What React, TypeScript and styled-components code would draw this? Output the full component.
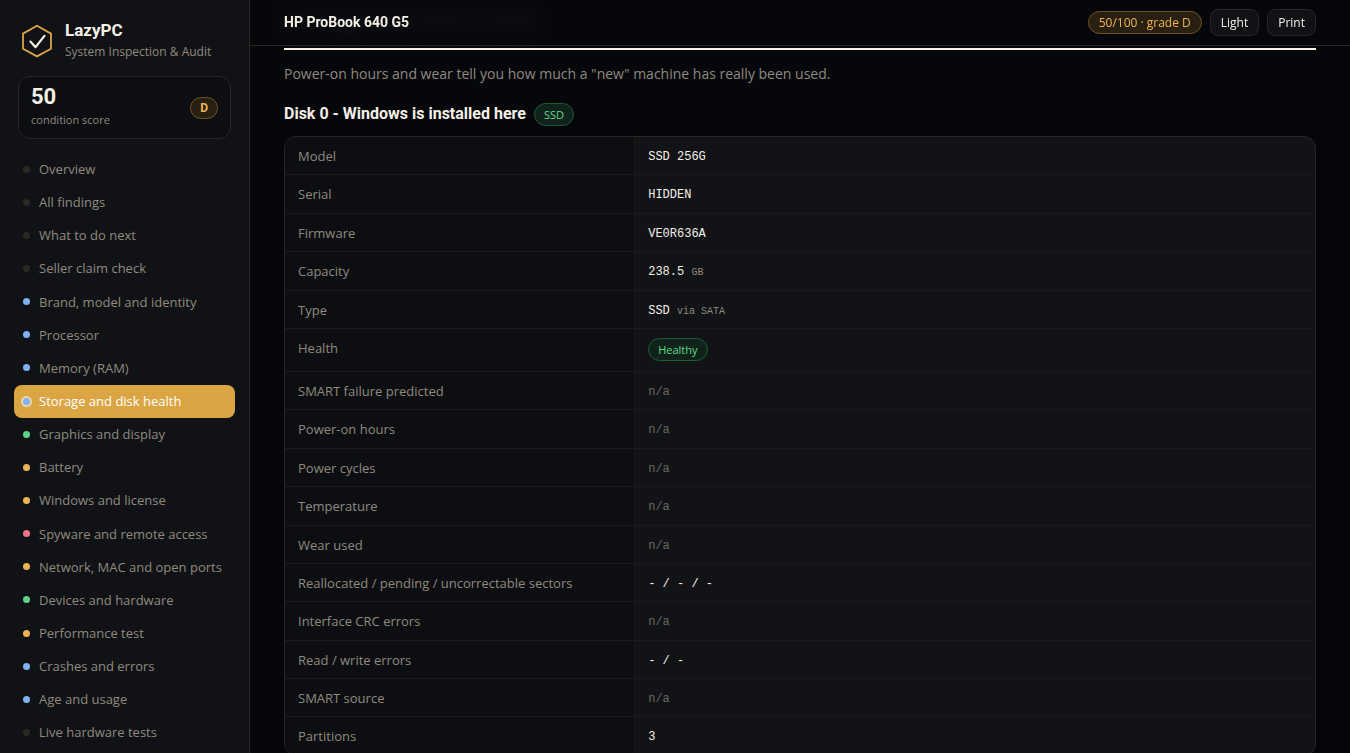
import React from "react";
import styled, { createGlobalStyle } from "styled-components";

const color = {
  page: "#06070b",
  panel: "#111216",
  inset: "#0d0e12",
  cell: "#121317",
  line: "#28261f",
  rowLine: "#1d1b18",
  text: "#f5f0e6",
  muted: "#8f8a7e",
  faint: "#6a675f",
  accent: "#dba544",
};

const tones = {
  none: "#2b2822",
  info: "#7fb2f2",
  ok: "#5fd38a",
  warn: "#ebb553",
  bad: "#f0728a",
};
type Tone = keyof typeof tones;

const pillTones = {
  warn: { fg: "#ebb553", bg: "#2a2012", line: "#6d5124" },
  ok: { fg: "#5fd98a", bg: "#10231a", line: "#1f5a39" },
};

const bodyFont = `"Open Sans", "Noto Sans", sans-serif`;
const headFont = `Roboto, "Liberation Sans", sans-serif`;
const monoFont = `"Liberation Mono", "DejaVu Sans Mono", monospace`;

const GlobalStyle = createGlobalStyle`
  *, *::before, *::after { box-sizing: border-box; }
  body {
    margin: 0;
    background: ${color.page};
    color: ${color.text};
    font: 13px/1.55 ${bodyFont};
  }
`;

const Shell = styled.div`
  display: flex;
  height: 100vh;
  overflow: hidden;
`;

const Sidebar = styled.aside`
  flex: 0 0 250px;
  overflow: hidden;
  padding: 17px 14px;
  background: ${color.panel};
  border-right: 1px solid ${color.line};
`;

const Brand = styled.div`
  display: flex;
  align-items: center;
  gap: 12px;
  padding: 0 7px;
  height: 47px;
`;

const BrandName = styled.div`
  font: 700 17px/22px ${headFont};
`;

const BrandTag = styled.div`
  color: ${color.muted};
  font-size: 12px;
  line-height: 22px;
  white-space: nowrap;
`;

const ScoreCard = styled.div`
  display: flex;
  align-items: center;
  justify-content: space-between;
  height: 63px;
  margin: 12px 4px 14px;
  padding: 0 12px;
  background: ${color.inset};
  border: 1px solid ${color.line};
  border-radius: 12px;
`;

const ScoreValue = styled.div`
  font: 700 22px/24px ${headFont};
`;

const ScoreLabel = styled.div`
  color: ${color.muted};
  font-size: 11px;
  line-height: 22px;
`;

const Pill = styled.span<{ $tone: keyof typeof pillTones; $strong?: boolean }>`
  display: inline-block;
  padding: 0 9px;
  border: 1px solid ${(p) => pillTones[p.$tone].line};
  border-radius: 12px;
  background: ${(p) => pillTones[p.$tone].bg};
  color: ${(p) => pillTones[p.$tone].fg};
  font: ${(p) => (p.$strong ? `700 12px/20px ${headFont}` : `400 11px/21px ${bodyFont}`)};
  white-space: nowrap;
`;

const GradePill = styled(Pill)`
  font-size: 12px;
  padding: 0 10px;
`;

const NavItem = styled.a<{ $active?: boolean }>`
  display: flex;
  align-items: center;
  gap: 9px;
  padding: 6px 9px 7px;
  border-radius: 8px;
  background: ${(p) => (p.$active ? color.accent : "transparent")};
  color: ${(p) => (p.$active ? "#ffffff" : color.muted)};
  text-decoration: none;
  white-space: nowrap;
`;

const Dot = styled.span<{ $tone: Tone; $ring?: boolean }>`
  flex: none;
  width: 7px;
  height: 7px;
  border-radius: 50%;
  background: ${(p) => tones[p.$tone]};
  box-shadow: ${(p) => (p.$ring ? "0 0 0 2px rgba(255, 255, 255, 0.55)" : "none")};
`;

const Main = styled.main`
  flex: 1;
  min-width: 0;
  overflow-y: auto;
  scrollbar-width: none;
`;

const TopBar = styled.header`
  position: sticky;
  top: 0;
  z-index: 2;
  display: flex;
  align-items: center;
  gap: 8px;
  height: 46px;
  padding: 0 34px;
  background: rgba(6, 7, 11, 0.94);
  backdrop-filter: blur(10px);
  border-bottom: 1px solid ${color.line};
`;

const Machine = styled.div`
  flex: 1;
  padding-bottom: 2px;
  font: 700 14px/20px ${headFont};
`;

const BarButton = styled.button`
  height: 27px;
  padding: 0 10px;
  border: 1px solid ${color.line};
  border-radius: 8px;
  background: ${color.panel};
  color: ${color.text};
  font: 12px/20px ${bodyFont};
`;

const Section = styled.section`
  margin-top: -46px;
  padding: 0 34px 34px;
`;

const SectionTitle = styled.h2`
  margin: 0 0 13px;
  height: 50px;
  padding-top: 5px;
  border-bottom: 2px solid ${color.text};
  font: 700 24px/32px ${headFont};
`;

const Intro = styled.p`
  margin: 0 0 18px;
  color: ${color.muted};
  font-size: 14px;
  line-height: 22px;
`;

const DiskTitle = styled.h3`
  display: flex;
  align-items: baseline;
  gap: 8px;
  margin: 0 0 10px;
  font: 700 16px/22px ${headFont};
`;

const TableFrame = styled.div`
  overflow: hidden;
  border: 1px solid ${color.line};
  border-radius: 12px;
  background: ${color.cell};
  box-shadow: 0 8px 24px rgba(0, 0, 0, 0.35);
`;

const FactTable = styled.table`
  width: 100%;
  border-collapse: separate;
  border-spacing: 0;
  font-size: 14px;
  line-height: 1.6;

  tr:last-child > * {
    border-bottom: 0;
  }
`;

const Label = styled.th`
  width: 34%;
  padding: 8px 13px 7px;
  background: ${color.inset};
  border-right: 1px solid ${color.rowLine};
  border-bottom: 1px solid ${color.rowLine};
  color: ${color.muted};
  font-weight: 400;
  text-align: left;
  vertical-align: top;
`;

const LabelText = styled.span`
  font-size: 13px;
`;

const Value = styled.td`
  padding: 9px 13px 10px;
  border-bottom: 1px solid ${color.rowLine};
  line-height: 18px;
  vertical-align: top;
`;

const Mono = styled.span<{ $faint?: boolean }>`
  color: ${(p) => (p.$faint ? color.faint : color.text)};
  font-family: ${monoFont};
  font-size: 12px;
  line-height: 12px;
`;

const Unit = styled.span`
  color: ${color.muted};
  font-size: 10px;
`;

const nav: [string, Tone][] = [
  ["Overview", "none"],
  ["All findings", "none"],
  ["What to do next", "none"],
  ["Seller claim check", "none"],
  ["Brand, model and identity", "info"],
  ["Processor", "info"],
  ["Memory (RAM)", "info"],
  ["Storage and disk health", "info"],
  ["Graphics and display", "ok"],
  ["Battery", "warn"],
  ["Windows and license", "warn"],
  ["Spyware and remote access", "bad"],
  ["Network, MAC and open ports", "warn"],
  ["Devices and hardware", "ok"],
  ["Performance test", "warn"],
  ["Crashes and errors", "info"],
  ["Age and usage", "info"],
  ["Live hardware tests", "none"],
];

const activeItem = "Storage and disk health";

type Fact = { label: string; value?: string; unit?: string; pill?: string };

const facts: Fact[] = [
  { label: "Model", value: "SSD 256G" },
  { label: "Serial", value: "HIDDEN" },
  { label: "Firmware", value: "VE0R636A" },
  { label: "Capacity", value: "238.5", unit: "GB" },
  { label: "Type", value: "SSD", unit: "via SATA" },
  { label: "Health", pill: "Healthy" },
  { label: "SMART failure predicted" },
  { label: "Power-on hours" },
  { label: "Power cycles" },
  { label: "Temperature" },
  { label: "Wear used" },
  { label: "Reallocated / pending / uncorrectable sectors", value: "- / - / -" },
  { label: "Interface CRC errors" },
  { label: "Read / write errors", value: "- / -" },
  { label: "SMART source" },
  { label: "Partitions", value: "3" },
];

function Logo() {
  return (
    <svg width="32" height="34" viewBox="0 0 32 34" fill="none" aria-hidden="true">
      <path d="M16 1.8 30 9.6v15.2L16 32.4 2 24.8V9.6z" stroke={color.accent} strokeWidth="1.8" />
      <path
        d="m9.4 17.6 5.2 5.6 8.8-11.4"
        stroke={color.text}
        strokeWidth="2.2"
        strokeLinecap="round"
        strokeLinejoin="round"
      />
    </svg>
  );
}

function FactValue({ fact }: { fact: Fact }) {
  if (fact.pill) return <Pill $tone="ok">{fact.pill}</Pill>;
  if (!fact.value) return <Mono $faint>n/a</Mono>;
  return (
    <Mono>
      {fact.value}
      {fact.unit && <> <Unit>{fact.unit}</Unit></>}
    </Mono>
  );
}

export default function App() {
  return (
    <>
      <GlobalStyle />
      <Shell>
        <Sidebar>
          <Brand>
            <Logo />
            <div>
              <BrandName>LazyPC</BrandName>
              <BrandTag>System Inspection &amp; Audit</BrandTag>
            </div>
          </Brand>
          <ScoreCard>
            <div>
              <ScoreValue>50</ScoreValue>
              <ScoreLabel>condition score</ScoreLabel>
            </div>
            <Pill $tone="warn" $strong>D</Pill>
          </ScoreCard>
          <nav>
            {nav.map(([name, tone]) => (
              <NavItem key={name} href="#" $active={name === activeItem}>
                <Dot $tone={tone} $ring={name === activeItem} />
                {name}
              </NavItem>
            ))}
          </nav>
        </Sidebar>
        <Main>
          <TopBar>
            <Machine>HP ProBook 640 G5</Machine>
            <GradePill $tone="warn">50/100 · grade D</GradePill>
            <BarButton type="button">Light</BarButton>
            <BarButton type="button">Print</BarButton>
          </TopBar>
          <Section>
            <SectionTitle>Storage and disk health</SectionTitle>
            <Intro>Power-on hours and wear tell you how much a "new" machine has really been used.</Intro>
            <DiskTitle>
              Disk 0 - Windows is installed here
              <Pill $tone="ok">SSD</Pill>
            </DiskTitle>
            <TableFrame>
              <FactTable>
                <tbody>
                  {facts.map((fact) => (
                    <tr key={fact.label}>
                      <Label scope="row">
                        <LabelText>{fact.label}</LabelText>
                      </Label>
                      <Value>
                        <FactValue fact={fact} />
                      </Value>
                    </tr>
                  ))}
                </tbody>
              </FactTable>
            </TableFrame>
          </Section>
        </Main>
      </Shell>
    </>
  );
}
